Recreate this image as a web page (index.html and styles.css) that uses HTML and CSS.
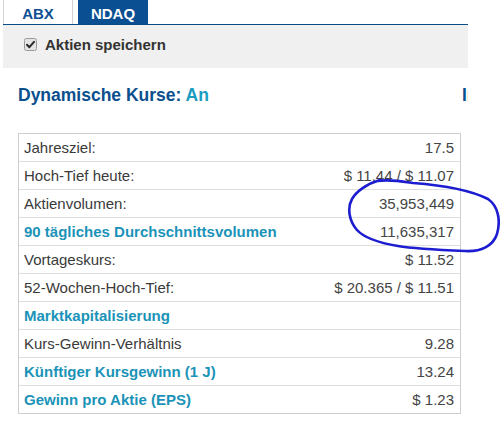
FILE: index.html
```html
<!DOCTYPE html>
<html lang="de">
<head>
<meta charset="utf-8">
<title>Aktien</title>
<link rel="stylesheet" href="styles.css">
</head>
<body>
<div class="page">
  <div class="tabs">
    <div class="tab">ABX</div>
    <div class="tab active">NDAQ</div>
  </div>
  <div class="savebar">
    <svg class="check" width="13" height="13" viewBox="0 0 13 13">
      <rect x="0.5" y="0.5" width="12" height="12" rx="2" fill="#e4e4e4" stroke="#9a9a9a"/>
      <path d="M3 6.8 L5.4 9.2 L10 3.8" fill="none" stroke="#2a2a2a" stroke-width="2" stroke-linecap="round" stroke-linejoin="round"/>
    </svg>
    <span class="save-label">Aktien speichern</span>
  </div>
  <div class="content">
    <div class="col-main">
      <h2 class="heading">Dynamische Kurse: <span class="on">An</span></h2>
      <div class="quote-table">
        <div class="row"><span class="label">Jahresziel:</span><span class="value">17.5</span></div>
        <div class="row"><span class="label">Hoch-Tief heute:</span><span class="value">$ 11.44 / $ 11.07</span></div>
        <div class="row"><span class="label">Aktienvolumen:</span><span class="value">35,953,449</span></div>
        <div class="row"><span class="label link">90 tägliches Durchschnittsvolumen</span><span class="value">11,635,317</span></div>
        <div class="row"><span class="label">Vortageskurs:</span><span class="value">$ 11.52</span></div>
        <div class="row"><span class="label">52-Wochen-Hoch-Tief:</span><span class="value">$ 20.365 / $ 11.51</span></div>
        <div class="row"><span class="label link">Marktkapitalisierung</span><span class="value"></span></div>
        <div class="row"><span class="label">Kurs-Gewinn-Verhältnis</span><span class="value">9.28</span></div>
        <div class="row"><span class="label link">Künftiger Kursgewinn (1 J)</span><span class="value">13.24</span></div>
        <div class="row"><span class="label link">Gewinn pro Aktie (EPS)</span><span class="value">$ 1.23</span></div>
      </div>
    </div>
    <div class="col-side">
      <h2 class="heading">Indikatoren</h2>
    </div>
  </div>
</div>
<svg class="annotation" width="500" height="424" viewBox="0 0 500 424">
  <path d="M 377 181 C 390 179, 400 181, 413 183 C 440 185, 470 190, 488 199 C 498 206, 501 220, 497 234 C 493 246, 481 252, 465 251 C 440 250, 415 249, 398 246 C 380 243, 365 239, 357 230 C 349 221, 347 208, 352 199 C 356 192, 366 184, 380 180" fill="none" stroke="#1c1cd0" stroke-width="2.6" stroke-linecap="round" stroke-linejoin="round"/>
</svg>
</body>
</html>
```
FILE: styles.css
```css
html, body {
  margin: 0;
  padding: 0;
  background: #ffffff;
}

body {
  font-family: "Liberation Sans", Arial, sans-serif;
  position: relative;
  width: 500px;
  height: 424px;
  overflow: hidden;
}

.page {
  margin-left: 3px;
  width: 465px;
  overflow: hidden;
}

.tabs {
  display: flex;
  gap: 5px;
  height: 24px;
  border-bottom: 1px solid #0d4c8b;
}

.tab {
  width: 70px;
  box-sizing: border-box;
  height: 24px;
  padding-top: 4px;
  line-height: 20px;
  text-align: center;
  font-size: 15px;
  font-weight: bold;
  color: #0d4f93;
  border-left: 1px solid #d4d4d4;
  border-right: 1px solid #d4d4d4;
}

.tab.active {
  background: #0b4f93;
  color: #ffffff;
  border-color: #0b4f93;
}

.savebar {
  display: flex;
  align-items: center;
  gap: 8px;
  height: 43px;
  box-sizing: border-box;
  padding: 0 0 4px 21px;
  background: #f0f0f0;
}

.check {
  display: block;
  flex: none;
}

.save-label {
  font-size: 15px;
  font-weight: bold;
  color: #333333;
  line-height: 17px;
}

.content {
  display: flex;
  gap: 1px;
  padding-left: 15px;
}

.col-main {
  width: 443px;
  flex: none;
}

.col-side {
  flex: none;
  width: 200px;
}

.heading {
  margin: 17px 0 0 0;
  font-size: 17.5px;
  line-height: 20px;
  font-weight: bold;
  color: #0b4f8f;
  white-space: nowrap;
}

.heading .on {
  color: #1b9cc0;
}

.quote-table {
  margin-top: 28px;
  border: 1px solid #cfcfcf;
}

.row {
  display: flex;
  justify-content: space-between;
  align-items: center;
  height: 27px;
  line-height: 26px;
  padding: 0 6px 0 5px;
  border-bottom: 1px solid #dedede;
  font-size: 15px;
  color: #3a3a3a;
  white-space: nowrap;
}

.row:last-child {
  border-bottom: none;
}

.label.link {
  color: #1b93b8;
  font-weight: bold;
}

.value {
  color: #444444;
}

.annotation {
  position: absolute;
  left: 0;
  top: 0;
  pointer-events: none;
}
```
